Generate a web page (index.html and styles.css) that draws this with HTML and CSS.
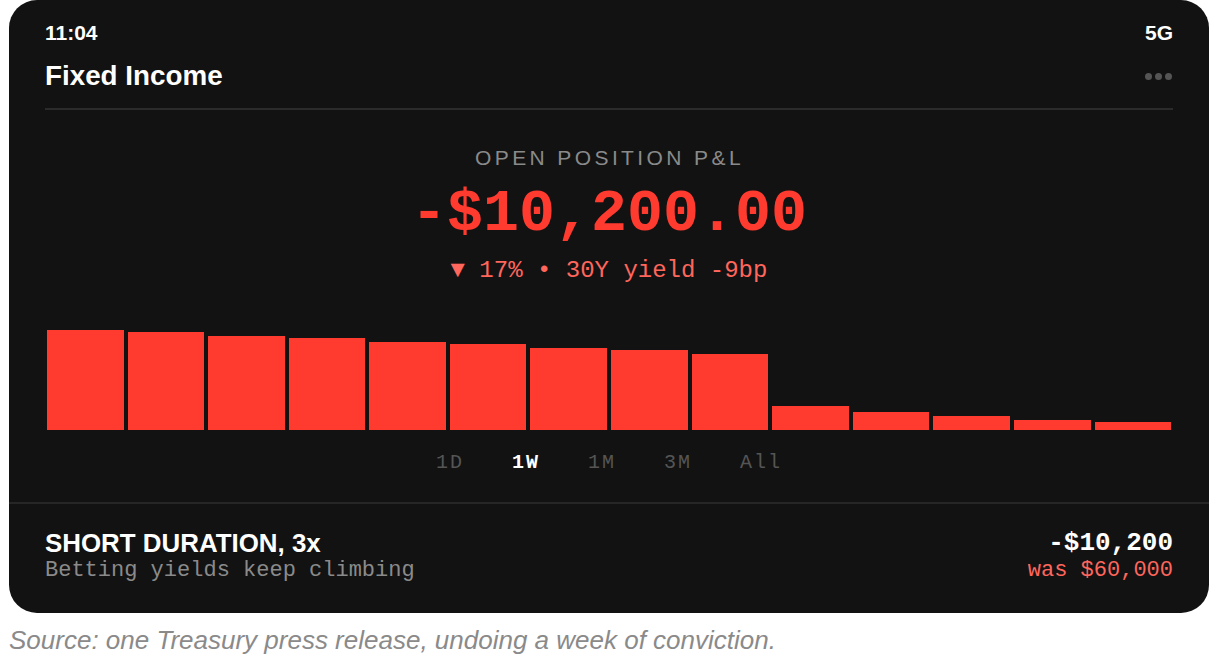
FILE: index.html
```html
<!DOCTYPE html>
<html lang="en">
<head>
<meta charset="utf-8">
<title>Fixed Income</title>
<link rel="stylesheet" href="styles.css">
</head>
<body>
<div class="page">
  <div class="card">
    <div class="top">
      <div class="status">
        <span>11:04</span>
        <span>5G</span>
      </div>
      <div class="titlebar">
        <h1 class="title">Fixed Income</h1>
        <div class="more"><i></i><i></i><i></i></div>
      </div>
      <div class="hero">
        <div class="label">OPEN POSITION P&amp;L</div>
        <div class="amount">-$10,200.00</div>
        <div class="delta">▼ 17% • 30Y yield -9bp</div>
      </div>
      <div class="chart">
        <div class="bar" style="height:100px"></div>
        <div class="bar" style="height:98px"></div>
        <div class="bar" style="height:94px"></div>
        <div class="bar" style="height:92px"></div>
        <div class="bar" style="height:88px"></div>
        <div class="bar" style="height:86px"></div>
        <div class="bar" style="height:82px"></div>
        <div class="bar" style="height:80px"></div>
        <div class="bar" style="height:76px"></div>
        <div class="bar" style="height:24px"></div>
        <div class="bar" style="height:18px"></div>
        <div class="bar" style="height:14px"></div>
        <div class="bar" style="height:10px"></div>
        <div class="bar" style="height:8px"></div>
      </div>
      <div class="tabs">
        <span class="tab">1D</span>
        <span class="tab active">1W</span>
        <span class="tab">1M</span>
        <span class="tab">3M</span>
        <span class="tab">All</span>
      </div>
    </div>
    <div class="position">
      <div class="pos-left">
        <div class="pos-name">SHORT DURATION, 3x</div>
        <div class="pos-desc">Betting yields keep climbing</div>
      </div>
      <div class="pos-right">
        <div class="pos-value">-$10,200</div>
        <div class="pos-was">was $60,000</div>
      </div>
    </div>
  </div>
  <p class="caption">Source: one Treasury press release, undoing a week of conviction.</p>
</div>
</body>
</html>
```
FILE: styles.css
```css
* { box-sizing: border-box; }
html, body { margin: 0; padding: 0; background: #ffffff; }
body { font-family: "Liberation Sans", Arial, sans-serif; }

.page { padding-left: 9px; }

.card {
  width: 1200px;
  height: 613px;
  background: #121212;
  border-radius: 28px;
  color: #ffffff;
  display: flex;
  flex-direction: column;
}

.top { padding: 21px 36px 0; }

.status {
  display: flex;
  justify-content: space-between;
  font-size: 21px;
  line-height: 24px;
  font-weight: bold;
}

.titlebar {
  margin-top: 15px;
  padding-bottom: 16px;
  border-bottom: 2px solid #2b2b2b;
  display: flex;
  justify-content: space-between;
  align-items: center;
}

.title {
  margin: 0;
  font-size: 27.8px;
  line-height: 32px;
  font-weight: bold;
}

.more { display: flex; gap: 3px; margin-right: 1px; }
.more i { width: 7px; height: 7px; border-radius: 50%; background: #555555; display: block; }

.hero { text-align: center; padding-top: 36px; }

.label {
  font-size: 21px;
  line-height: 24px;
  letter-spacing: 3.4px;
  color: #8a8a8a;
  padding-left: 1px;
}

.amount {
  margin-top: 10px;
  font-family: "Liberation Mono", "DejaVu Sans Mono", monospace;
  font-weight: bold;
  font-size: 60px;
  line-height: 68px;
  color: #ff3b30;
}

.delta {
  margin-top: 9px;
  font-family: "Liberation Mono", "DejaVu Sans Mono", monospace;
  font-size: 24px;
  line-height: 28px;
  color: #ff665c;
}

.chart {
  margin: 45px 2px 0;
  height: 100px;
  display: flex;
  align-items: flex-end;
  gap: 4px;
}
.bar { flex: 1; background: #ff3b30; }

.tabs {
  margin-top: 21px;
  padding-bottom: 27px;
  display: flex;
  justify-content: center;
  gap: 48px;
  font-family: "Liberation Mono", "DejaVu Sans Mono", monospace;
  font-size: 20px;
  line-height: 24px;
  letter-spacing: 2px;
  color: #555555;
}
.tab.active { color: #ffffff; font-weight: bold; }

.position {
  border-top: 2px solid #262626;
  margin-top: auto;
  padding: 24px 36px 31px;
  display: flex;
  justify-content: space-between;
}

.pos-name {
  font-size: 25.9px;
  line-height: 30px;
  font-weight: bold;
}
.pos-desc {
  margin-top: 1px;
  font-family: "Liberation Mono", "DejaVu Sans Mono", monospace;
  font-size: 22px;
  line-height: 24px;
  color: #8a8a8a;
}

.pos-right { text-align: right; }
.pos-value {
  font-family: "Liberation Mono", "DejaVu Sans Mono", monospace;
  font-weight: bold;
  font-size: 26px;
  line-height: 30px;
}
.pos-was {
  margin-top: 1px;
  font-family: "Liberation Mono", "DejaVu Sans Mono", monospace;
  font-size: 22px;
  line-height: 24px;
  color: #ff665c;
}

.caption {
  margin: 12px 0 0;
  font-style: italic;
  font-size: 26px;
  line-height: 30px;
  color: #8a8a8a;
}
```
